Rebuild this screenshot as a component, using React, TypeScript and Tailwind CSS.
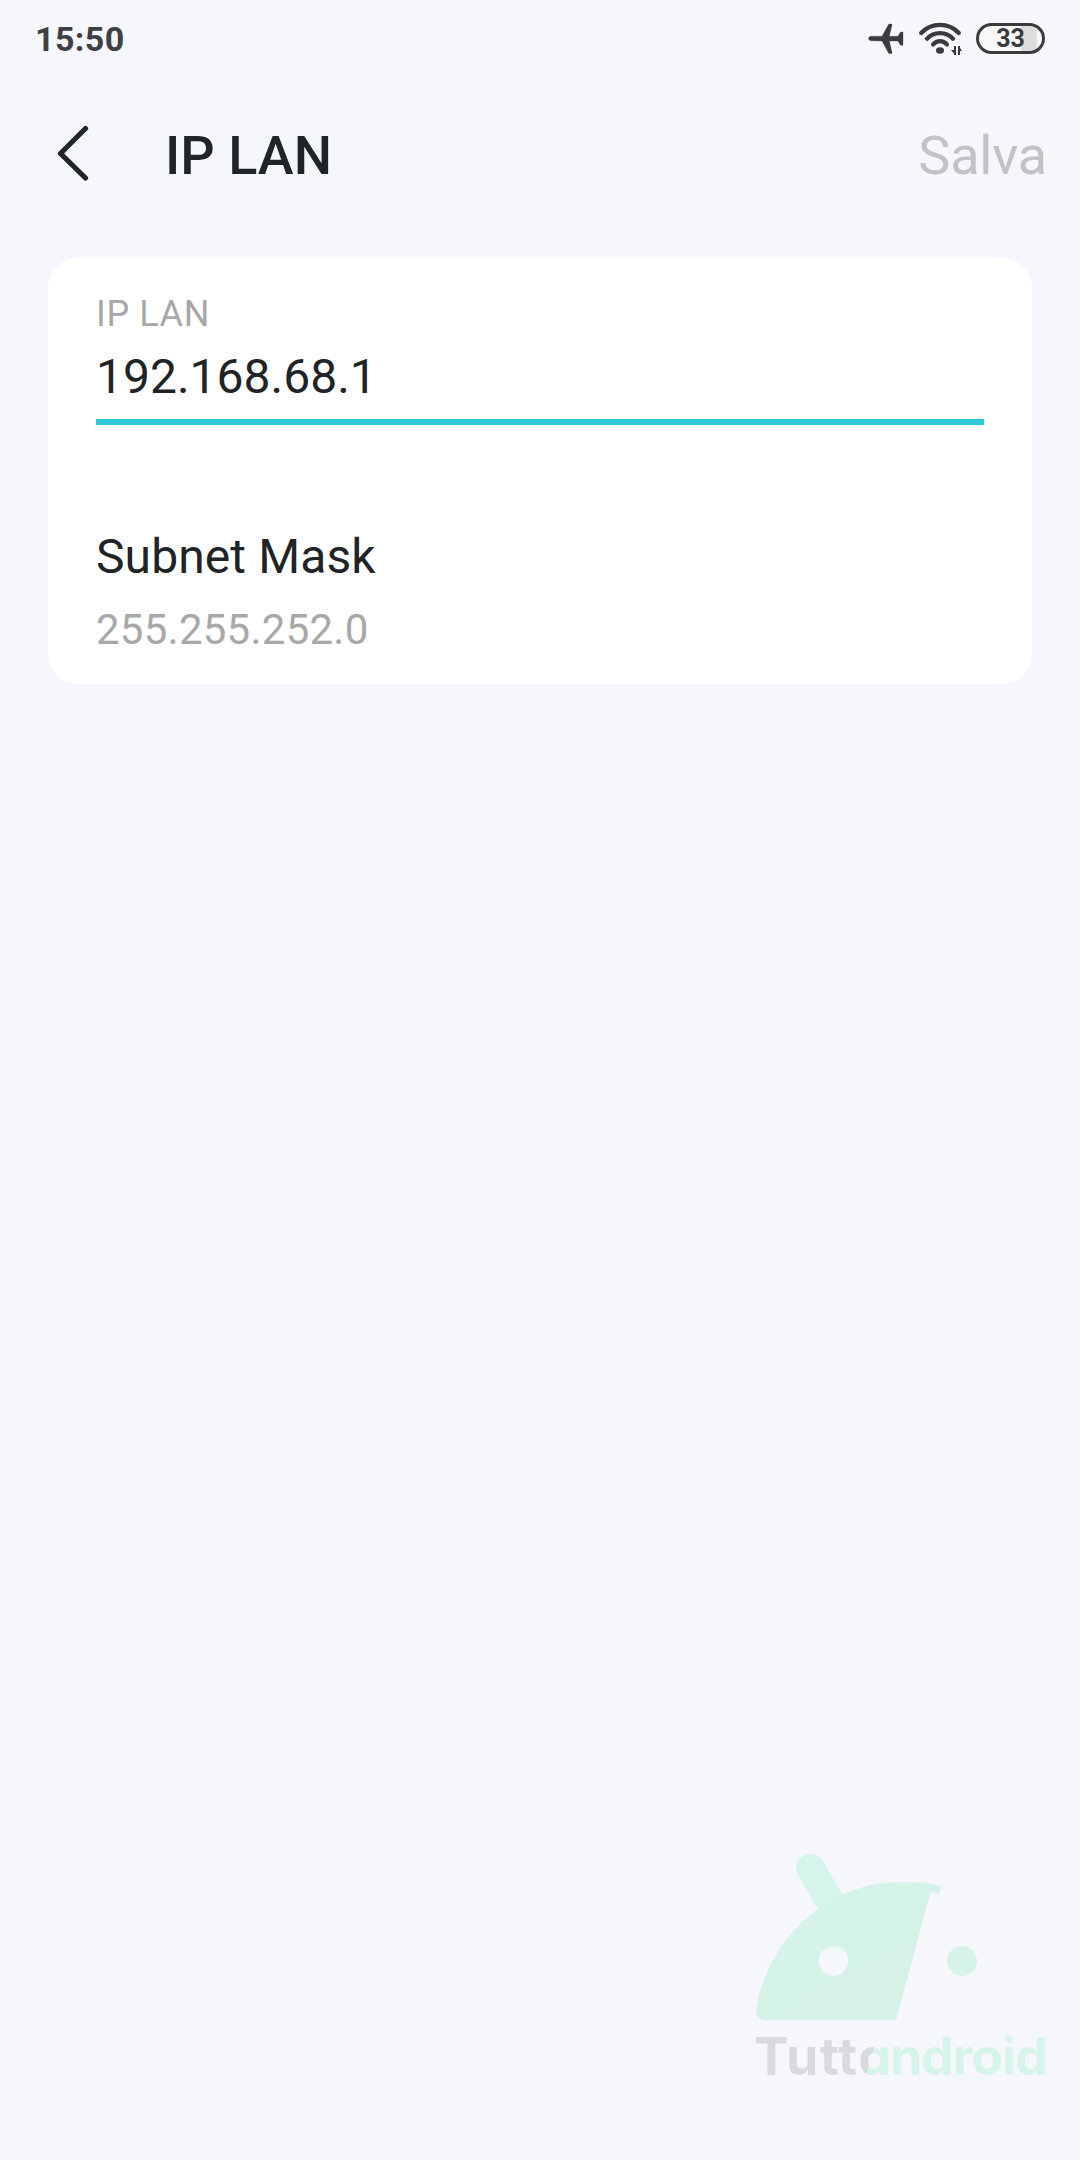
function AirplaneIcon() {
    return (
        <svg width="36" height="32" viewBox="0 0 36 32" fill="#3b3b3d" stroke="#3b3b3d" strokeWidth="0.3" strokeLinejoin="round">
            <path d="M0.5 15.500 Q0.5 13.400 3 13.200 H14 L20.500 1.500 Q20.800 1 21.500 1 H23.500 Q24.300 1 24 2 L21.300 13.200 H30 L32.200 9.500 Q32.500 9 33 9 H35 V22.200 H33 Q32.500 22.200 32.200 21.700 L30 18 H21.300 L24 29.500 Q24.300 30.500 23.500 30.500 H21.500 Q20.800 30.500 20.500 30 L14 18 L3 17.800 Q0.5 17.600 0.5 15.500 Z" />
        </svg>
    );
}

function WifiIcon() {
    return (
        <svg width="44" height="34" viewBox="0 0 44 34" fill="none" stroke="#3b3b3d" strokeWidth="4.2" strokeLinecap="round">
            <path d="M3.200 11 C13.500 0.200 30.500 0.200 40.800 11" />
            <path d="M9 16.800 C16 9.300 28 9.300 35 16.800" />
            <path d="M15 22.500 C19 18 25 18 29 22.500" />
            <ellipse cx="22" cy="28.500" rx="4" ry="3.300" fill="#3b3b3d" stroke="none" />
            <path d="M37 24 V33 M41 24 V33" strokeWidth="2" strokeLinecap="butt" />
            <path d="M33 28 H37 V33 Z M41 24 V29 H44 Z" fill="#3b3b3d" stroke="none" />
        </svg>
    );
}

function Battery() {
    return (
        <div className="flex h-[31px] w-[69px] items-center justify-center rounded-full border-[3px] border-[#3b3b3d] bg-[linear-gradient(90deg,#f8f8fb_66%,#dddde0_66%,#dddde0_90%,#f8f8fb_94%)]">
            <span className="text-[25px] leading-none font-bold text-[#3b3b3d]">33</span>
        </div>
    );
}

function StatusBar() {
    return (
        <div className="flex h-[78px] items-center justify-between pr-[35px] pl-[35px]">
            <span className="text-[34px] leading-[78px] font-bold tracking-[0.4px] text-[#3f4043]">15:50</span>
            <div className="flex items-center pb-px">
                <AirplaneIcon />
                <div className="ml-[14px]">
                    <WifiIcon />
                </div>
                <div className="ml-[14px]">
                    <Battery />
                </div>
            </div>
        </div>
    );
}

function Header() {
    return (
        <header className="flex h-[155px] items-center pr-[33px] pl-[56px]">
            <button aria-label="Indietro">
                <svg width="34" height="60" viewBox="0 0 34 60" fill="none" stroke="#20242a" strokeWidth="5.2" strokeLinecap="round" strokeLinejoin="round">
                    <path d="M29.500 2.500 L4.500 27.500 L29.500 52" />
                </svg>
            </button>
            <h1 className="ml-[75px] text-[54px] font-medium text-[#1f2427]">IP LAN</h1>
            <button className="ml-auto text-[54px] tracking-[-0.2px] text-[#c2c3c7]">Salva</button>
        </header>
    );
}

function LanCard() {
    return (
        <section className="mx-12 mt-[25px] flex h-[426px] flex-col rounded-[30px] bg-white px-12 pt-[34px]">
            <label htmlFor="lan-ip" className="text-[36px] leading-[44px] tracking-[0.6px] text-[#a8a8a8]">IP LAN</label>
            <input
                id="lan-ip"
                defaultValue="192.168.68.1"
                className="h-[89px] border-b-6 border-[#2fc9d9] pb-[2px] text-[48px] text-[#1f2427] outline-none"
            />
            <div className="mt-[104px] text-[48px] leading-[56px] tracking-[0.1px] text-[#1f2427]">Subnet Mask</div>
            <div className="mt-5 text-[42px] leading-[50px] tracking-[0.25px] text-[#a8a8a8]">255.255.252.0</div>
        </section>
    );
}

function Watermark() {
    return (
        <div className="mt-auto mr-[34px] mb-[73px] ml-auto w-[290px]">
            <svg width="290" height="174" viewBox="0 0 290 174">
                <defs>
                    <linearGradient id="head" x1="0" y1="0" x2="0.6" y2="1">
                        <stop offset="0" stopColor="#d4f5ec" />
                        <stop offset="1" stopColor="#d6f1e5" />
                    </linearGradient>
                </defs>
                <path
                    d="M232 7 A15 15 0 0 1 248 27 L229 62 Q282 101 288 155 Q290 173 280 173 H140 L175 40 L205 47 L219 20 Q224 10 232 7 Z"
                    fill="#f5f7fa"
                />
                <path
                    d="M0 158 C6 116 30 79 62 56 L42 22 A14.200 14.200 0 0 1 67 8 L87 42 Q112 29 147 29 Q168 29 182 32 Q185 33 184.500 35 L183.500 39 Q183 41 181 40 L177 39 Q175 38 174 41 L140 167 H9 Q0 166 0 158 Z"
                    fill="url(#head)"
                />
                <circle cx="77.300" cy="108" r="14.800" fill="#f5f7fc" />
                <circle cx="206" cy="108" r="15" fill="#d5f3e9" />
            </svg>
            <div className="-ml-0.5 w-max bg-[linear-gradient(105deg,#d9dadd_40.5%,#d6f4e9_40.5%)] bg-clip-text font-['Inter'] text-[52px] leading-[60px] font-bold tracking-[-1.2px] text-transparent [font-feature-settings:'cv11']">
                <span className="tracking-[1.2px]">Tutt</span>android
            </div>
        </div>
    );
}

export default function App() {
    return (
        <main className="flex h-[2160px] w-[1080px] flex-col overflow-hidden bg-[#f5f7fc] font-[Roboto,sans-serif]">
            <StatusBar />
            <Header />
            <LanCard />
            <Watermark />
        </main>
    );
}
